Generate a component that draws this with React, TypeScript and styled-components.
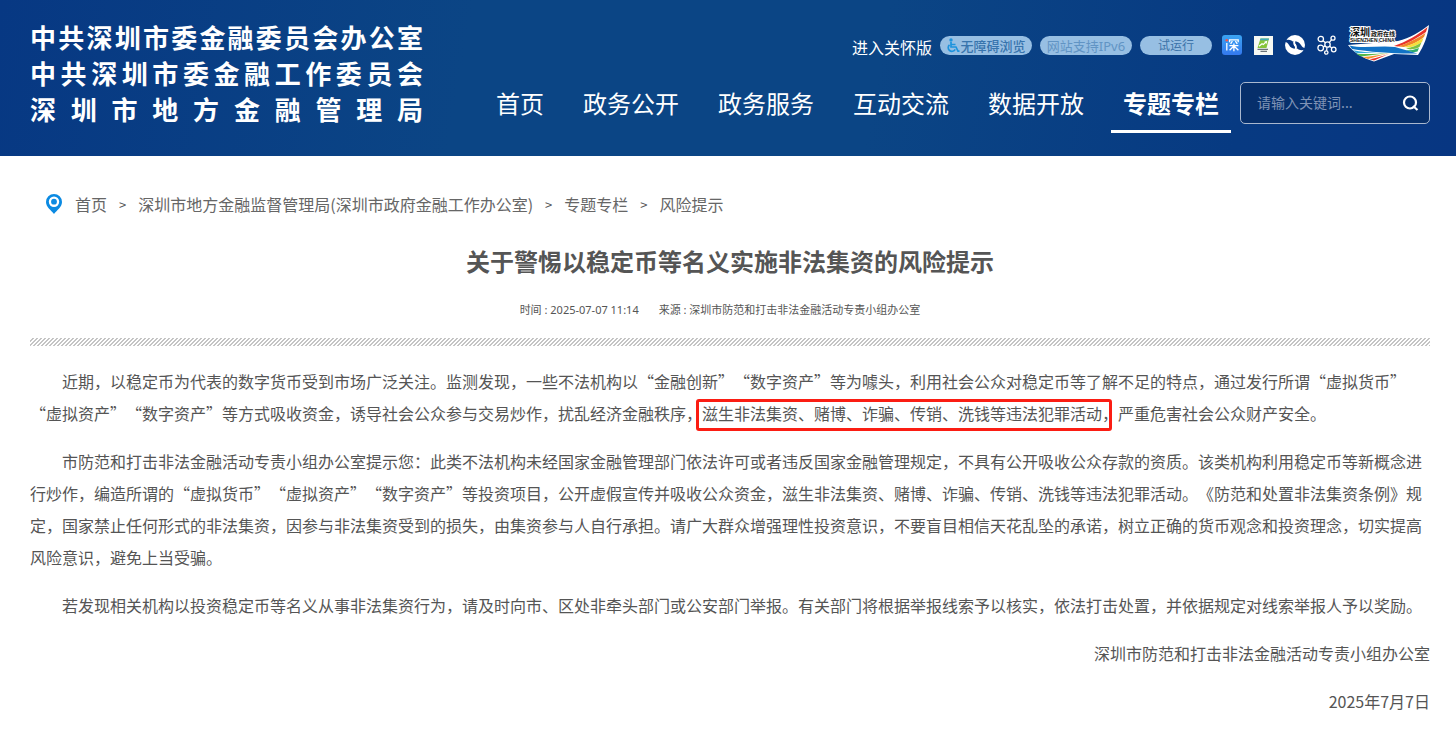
import React from "react";
import styled, { createGlobalStyle } from "styled-components";

const sans = `"Noto Sans CJK SC", sans-serif`;
const sansWithLatin = `"Noto Sans", "Noto Sans CJK SC", sans-serif`;

const Global = createGlobalStyle`
  * { box-sizing: border-box; }
  body {
    margin: 0;
    background: #fff;
    color: #555;
    font-family: ${sans};
    font-size: 16px;
    text-spacing-trim: space-all;
  }
  a { color: inherit; text-decoration: none; }
`;

const Header = styled.header`
  display: flex;
  justify-content: space-between;
  align-items: flex-start;
  padding: 19px 26px 23px 30px;
  background: linear-gradient(100deg, #073883 0%, #0b4585 32%, #0b4585 60%, #073a82 85%, #073682 100%);
  color: #fff;
`;

const Brand = styled.a`
  display: block;
  width: 393px;
  font-size: 26px;
  font-weight: 700;
  line-height: 36px;
`;

const BrandLine = styled.span`
  display: block;
  text-align-last: justify;
`;

const HeaderRight = styled.div`
  display: flex;
  flex-direction: column;
  align-items: flex-end;
`;

const Tools = styled.div`
  display: flex;
  align-items: center;
  height: 52px;
`;

const CareLink = styled.a`
  margin-right: 8px;
  padding-top: 3px;
  line-height: 24px;
`;

const Pill = styled.button<{ $width: number; $size: number; $bold?: boolean; $ink: string }>`
  display: flex;
  align-items: center;
  justify-content: center;
  width: ${(p) => p.$width}px;
  height: 19px;
  margin: 0 8px 0 0;
  padding: 1px 0 0;
  border: 0;
  border-radius: 10px;
  background: #97bfe3;
  color: ${(p) => p.$ink};
  font: ${(p) => (p.$bold ? 500 : 400)} ${(p) => p.$size}px/18px ${sansWithLatin};
  white-space: nowrap;
`;

const IconLinks = styled.div`
  display: flex;
  align-items: center;
  gap: 12px;
  margin: 0 11px 0 2px;
`;

const IconLink = styled.a`
  display: flex;
`;

const NavRow = styled.div`
  display: flex;
  align-items: flex-start;
  gap: 9px;
  padding-top: 11px;
`;

const Nav = styled.nav`
  display: flex;
  gap: 15px;
`;

const NavItem = styled.a<{ $active?: boolean }>`
  padding: 2px 12px 8px;
  border-bottom: 3px solid ${(p) => (p.$active ? "#fff" : "transparent")};
  font-size: 24px;
  font-weight: ${(p) => (p.$active ? 700 : 400)};
  line-height: 38px;
  white-space: nowrap;
`;

const Search = styled.form`
  display: flex;
  align-items: center;
  width: 190px;
  height: 42px;
  padding: 0 10px 0 16px;
  border: 1px solid #a9b8cf;
  border-radius: 5px;
  background: #062f6b;
`;

const SearchInput = styled.input`
  flex: 1;
  min-width: 0;
  padding: 0 0 3px;
  border: 0;
  outline: 0;
  background: none;
  color: #fff;
  font: 14px/20px ${sans};
  &::placeholder { color: #7f93b6; opacity: 1; }
`;

const SearchButton = styled.button`
  display: flex;
  padding: 0;
  border: 0;
  background: none;
`;

const Main = styled.main`
  padding: 35px 26px 20px 30px;
`;

const Crumbs = styled.nav`
  display: flex;
  align-items: center;
  padding-left: 15px;
  line-height: 26px;
  color: #666;
`;

const CrumbLink = styled.a`
  margin-left: 12px;
`;

const Arrow = styled.span`
  margin-left: 12px;
  padding-top: 2px;
  font-size: 13px;
  line-height: 24px;
  color: #555;
`;

const Title = styled.h1`
  margin: 24px 0 0;
  font-size: 24px;
  font-weight: 700;
  line-height: 40px;
  text-align: center;
`;

const Meta = styled.p`
  display: flex;
  justify-content: center;
  gap: 20px;
  margin: 19px 0 0;
  padding-right: 20px;
  font-family: ${sansWithLatin};
  font-size: 11px;
  line-height: 20px;
`;

const Divider = styled.hr`
  height: 8px;
  margin: 18px 0 0;
  border: 0;
  background: linear-gradient(135deg, #fff 37%, #c4c4c4 37% 50%, #fff 50% 87%, #c4c4c4 87%) 0 0 / 4px 4px;
`;

const Article = styled.article`
  padding-top: 19px;
`;

const Para = styled.p`
  margin: 0 0 16px;
  line-height: 32px;
  text-indent: 2em;
`;

const Marked = styled.mark`
  position: relative;
  background: none;
  color: inherit;
  text-indent: 0;

  &::after {
    content: "";
    position: absolute;
    inset: -2px 6px -6px -6px;
    border: 3px solid #fb1d13;
    border-radius: 3px;
  }
`;

const Sign = styled.p`
  margin: 0 0 16px;
  line-height: 32px;
  text-align: right;
`;

const navItems = ["首页", "政务公开", "政务服务", "互动交流", "数据开放", "专题专栏"];
const crumbs = ["首页", "深圳市地方金融监督管理局(深圳市政府金融工作办公室)", "专题专栏", "风险提示"];

function Wheelchair() {
  return (
    <svg width="14" height="15" viewBox="0 0 14 15" fill="none" stroke="#1d93dd" strokeWidth="1.7" aria-hidden="true">
      <circle cx="5" cy="2" r="1.7" fill="#1d93dd" stroke="none" />
      <path d="M5 4v5h5l2 4.200h1.500M5 6.500h4.500" />
      <path d="M3.500 6.800a3.700 3.700 0 1 0 5.700 4.500" />
    </svg>
  );
}

function IShenzhen() {
  return (
    <svg width="20" height="20" viewBox="0 0 20 20" aria-hidden="true">
      <defs>
        <linearGradient id="ishen" x1="0" y1="0" x2="0" y2="1">
          <stop offset="0" stopColor="#3ba4f2" />
          <stop offset="1" stopColor="#3478ee" />
        </linearGradient>
      </defs>
      <rect width="20" height="20" rx="3" fill="url(#ishen)" />
      <circle cx="4.800" cy="5.300" r="1.300" fill="#f4554a" />
      <g fill="none" stroke="#fff" strokeWidth="1.300">
        <path d="M4.800 8v7.400" />
        <path d="M7.600 7.200V4.900h8.600v2.300M10.400 6.200L8.600 8.800M13.400 6.200l1.900 2.600" />
        <path d="M7.400 10.700h9M11.900 8.400v7.800M11.600 11.200L7.600 15.300M12.200 11.200l4.200 4.100" />
      </g>
    </svg>
  );
}

function PhotoBadge() {
  return (
    <svg width="19" height="19" viewBox="0 0 19 19" aria-hidden="true">
      <rect width="19" height="19" fill="#f6f8f3" />
      <path d="M6.500 2.500h8.500l-2.500 9.500H3.500z" fill="#86c43a" />
      <path d="M6.500 2.500h8.500l-.5 1.800H6z" fill="#3fa9bf" />
      <path d="M5 10.300l3-2.600 1.300.8 2.800-2.600" fill="none" stroke="#fff" strokeWidth="1.200" />
      <path d="M13.300 4.800l-.8 3.200-2.300-2.300z" fill="#fff" />
      <path d="M3.500 13.300h10.500M6.500 15.300h6.500" stroke="#6b7378" strokeWidth="1.200" />
    </svg>
  );
}

function SwirlBadge() {
  return (
    <svg width="20" height="20" viewBox="0 0 20 20" aria-hidden="true">
      <circle cx="10" cy="10" r="10" fill="#fff" />
      <path d="M0 5.500C3.500 4 7 5 8.500 7.500L9 10.500l3.500 3.200c-4 .6-7-.7-8.500-3.700C3 8 1.500 7 0 7z" fill="#073782" />
      <path d="M20 14.500c-3.500 1.500-7 .5-8.500-2L11 9.500 7.500 6.300c4-.6 7 .7 8.500 3.700 1 2 2.500 3 4 3z" fill="#073782" />
      <path d="M9.200 5.200c.3 3-.2 4 .8 4.800s1.100 1.800.8 4.800" fill="none" stroke="#fff" strokeWidth="1.800" />
    </svg>
  );
}

function Network() {
  return (
    <svg width="20" height="20" viewBox="0 0 20 20" fill="none" stroke="#fff" strokeWidth="1.300" aria-hidden="true">
      <circle cx="10.500" cy="9.500" r="2.700" />
      <circle cx="3.800" cy="4" r="2.700" />
      <circle cx="16" cy="3.200" r="2" />
      <circle cx="3.700" cy="13" r="2.800" />
      <circle cx="9.300" cy="17.500" r="1.700" />
      <circle cx="16.700" cy="14.500" r="2.300" />
      <path d="M6 5.700l2.500 2M14.600 4.700L12.400 7.400M6.300 11.800l1.900-1M10 12.200l-.4 3.500M12.700 11.200l2 1.700" />
    </svg>
  );
}

const LogoText = styled.text`
  font-weight: 700;
  fill: #111;
  stroke: #fff;
  stroke-width: 2px;
  paint-order: stroke;
`;

function ShenzhenLogo() {
  return (
    <svg width="82" height="40" viewBox="0 0 82 40" aria-label="深圳政府在线">
      <path d="M0 20L50 16C62 13 72 7 81 0c-1 10-5 21-11 30l-24-1-20 7.500C14 33 5 27 0 20z" fill="#fff" />
      <path d="M46 21C58 17 70 10 79.500 2L78 7C68 14 58 19 50 21.500z" fill="#e8322a" />
      <path d="M50 21.500C61 18 70 13 77.500 8L76 12c-6 5-13 8-20 10z" fill="#f0862a" />
      <path d="M56 22c7-2 13-5 19.500-9L74 17c-4 3-8 4.500-14 5.500z" fill="#f5df3c" />
      <path d="M58 23.500c6-1 11-3 15.500-6L71.500 22c-3 1.500-5 2-9 2.500z" fill="#7cc242" />
      <path d="M57 25.500c5 0 10-.8 14-2.500L69.500 26.500l-4 .7z" fill="#2fae6b" />
      <path d="M1.500 20.500C16 24 32 20 47 22l22.500 6.500C48 29 22 27 4 24z" fill="#1173c6" />
      <path d="M5 25.300c12 2.500 26 2.300 40 1.700l-36 1.300z" fill="#35a9dc" />
      <path d="M8 28.700c10 .8 22 .2 34-1L13 31.500z" fill="#55b848" />
      <path d="M14.500 32c9-.5 18-2 27-4L20 34z" fill="#f3922d" />
      <path d="M21.500 34.300c7-1.200 14-3.300 21-6L26 35.500z" fill="#e8322a" />
      <LogoText x="2" y="11" fontFamily="Noto Sans CJK SC" fontSize="10">深圳</LogoText>
      <LogoText x="23" y="11" fontFamily="Noto Sans CJK SC" fontSize="6">政府在线</LogoText>
      <LogoText x="2" y="17" fontFamily="Liberation Sans" fontSize="5">SHENZHEN CHINA</LogoText>
    </svg>
  );
}

function Pin() {
  return (
    <svg width="18" height="22" viewBox="0 0 18 22" aria-hidden="true">
      <path d="M9 1a8 8 0 0 0-8 8c0 5 5 8 8 12 3-4 8-7 8-12a8 8 0 0 0-8-8z" fill="#0b8ae2" />
      <circle cx="9" cy="8.700" r="5.200" fill="#fff" />
      <circle cx="9" cy="8.700" r="2.900" fill="#0b8ae2" />
    </svg>
  );
}

export default function App() {
  return (
    <div lang="zh-CN">
      <Global />
      <Header>
        <Brand href="#">
          <BrandLine>中共深圳市委金融委员会办公室</BrandLine>
          <BrandLine>中共深圳市委金融工作委员会</BrandLine>
          <BrandLine>深圳市地方金融管理局</BrandLine>
        </Brand>
        <HeaderRight>
          <Tools>
            <CareLink href="#">进入关怀版</CareLink>
            <Pill type="button" $width={92} $size={13} $ink="#3774ad" $bold><Wheelchair />无障碍浏览</Pill>
            <Pill type="button" $width={92} $size={13} $ink="#6194c4">网站支持IPv6</Pill>
            <Pill type="button" $width={72} $size={12} $ink="#3b72a8">试运行</Pill>
            <IconLinks>
              <IconLink href="#" aria-label="i深圳"><IShenzhen /></IconLink>
              <IconLink href="#" aria-label="公众号"><PhotoBadge /></IconLink>
              <IconLink href="#" aria-label="小程序"><SwirlBadge /></IconLink>
              <IconLink href="#" aria-label="矩阵"><Network /></IconLink>
            </IconLinks>
            <IconLink href="#"><ShenzhenLogo /></IconLink>
          </Tools>
          <NavRow>
            <Nav>
              {navItems.map((item) => (
                <NavItem key={item} href="#" $active={item === "专题专栏"}>{item}</NavItem>
              ))}
            </Nav>
            <Search>
              <SearchInput type="text" placeholder="请输入关键词..." aria-label="请输入关键词" />
              <SearchButton type="button" aria-label="搜索">
                <svg width="17" height="17" viewBox="0 0 17 17" fill="none" stroke="#fff" strokeWidth="2.200">
                  <circle cx="8" cy="7.500" r="6" />
                  <path d="M11 11l4.500 4" />
                </svg>
              </SearchButton>
            </Search>
          </NavRow>
        </HeaderRight>
      </Header>
      <Main>
        <Crumbs aria-label="当前位置">
          <Pin />
          {crumbs.map((crumb, i) => (
            <React.Fragment key={crumb}>
              {i > 0 && <Arrow>&gt;</Arrow>}
              <CrumbLink href="#">{crumb}</CrumbLink>
            </React.Fragment>
          ))}
        </Crumbs>
        <Title>关于警惕以稳定币等名义实施非法集资的风险提示</Title>
        <Meta>
          <span>时间 : 2025-07-07 11:14</span>
          <span>来源 : 深圳市防范和打击非法金融活动专责小组办公室</span>
        </Meta>
        <Divider />
        <Article>
          <Para>
            近期，以稳定币为代表的数字货币受到市场广泛关注。监测发现，一些不法机构以“金融创新”“数字资产”等为噱头，利用社会公众对稳定币等了解不足的特点，通过发行所谓“虚拟货币”<wbr />“虚拟资产”“数字资产”等方式吸收资金，诱导社会公众参与交易炒作，扰乱经济金融秩序，<Marked>滋生非法集资、赌博、诈骗、传销、洗钱等违法犯罪活动，</Marked>严重危害社会公众财产安全。
          </Para>
          <Para>
            市防范和打击非法金融活动专责小组办公室提示您：此类不法机构未经国家金融管理部门依法许可或者违反国家金融管理规定，不具有公开吸收公众存款的资质。该类机构利用稳定币等新概念进行炒作，编造所谓的“虚拟货币”“虚拟资产”“数字资产”等投资项目，公开虚假宣传并吸收公众资金，滋生非法集资、赌博、诈骗、传销、洗钱等违法犯罪活动。《防范和处置非法集资条例》规定，国家禁止任何形式的非法集资，因参与非法集资受到的损失，由集资参与人自行承担。请广大群众增强理性投资意识，不要盲目相信天花乱坠的承诺，树立正确的货币观念和投资理念，切实提高风险意识，避免上当受骗。
          </Para>
          <Para>
            若发现相关机构以投资稳定币等名义从事非法集资行为，请及时向市、区处非牵头部门或公安部门举报。有关部门将根据举报线索予以核实，依法打击处置，并依据规定对线索举报人予以奖励。
          </Para>
          <Sign>深圳市防范和打击非法金融活动专责小组办公室</Sign>
          <Sign>2025年7月7日</Sign>
        </Article>
      </Main>
    </div>
  );
}
